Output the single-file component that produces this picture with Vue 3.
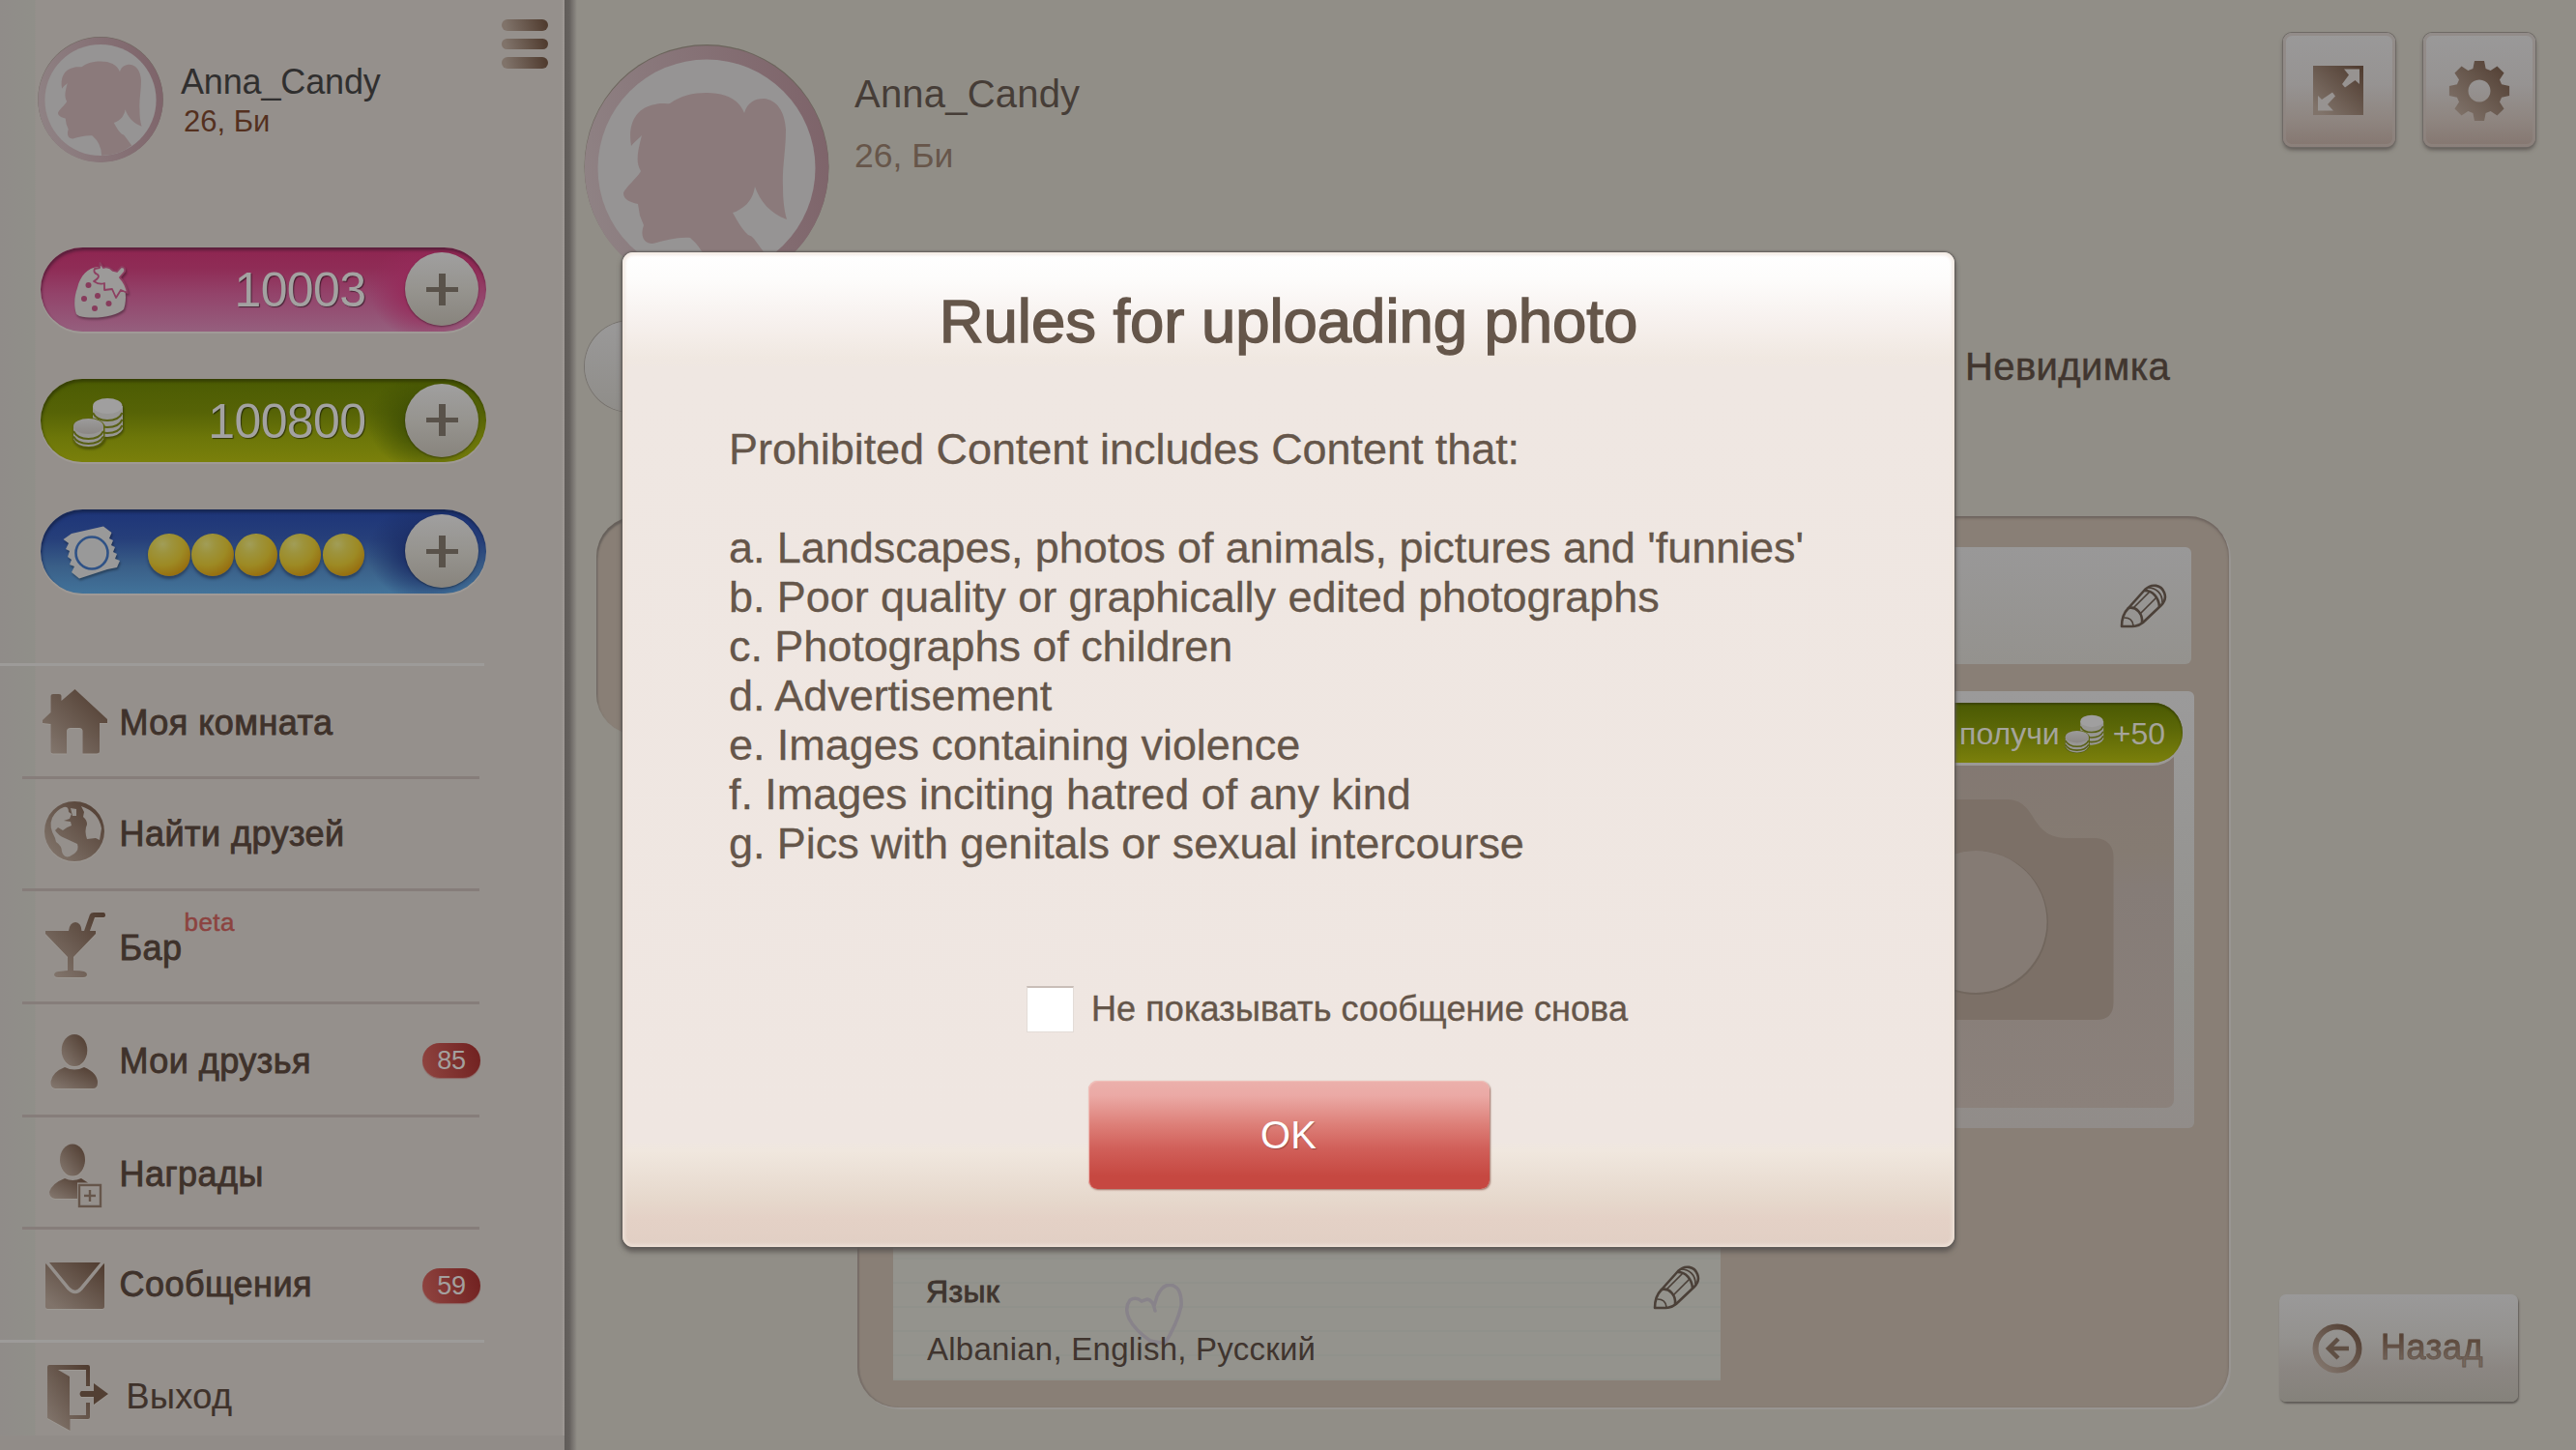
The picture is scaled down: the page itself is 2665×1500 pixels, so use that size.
<script setup>
const lives = [1, 2, 3, 4, 5]

const rules = [
  'Prohibited Content includes Content that:',
  '',
  "a. Landscapes, photos of animals, pictures and 'funnies'",
  'b. Poor quality or graphically edited photographs',
  'c. Photographs of children',
  'd. Advertisement',
  'e. Images containing violence',
  'f. Images inciting hatred of any kind',
  'g. Pics with genitals or sexual intercourse'
]

// Outline of an eight-toothed cog centred on 0,0
const gear = (() => {
  const pts = []
  for (let i = 0; i < 8; i++) {
    const a = (i * Math.PI) / 4
    for (const [r, d] of [[24, -0.28], [31.5, -0.16], [31.5, 0.16], [24, 0.28]]) {
      pts.push(`${(r * Math.sin(a + d)).toFixed(2)} ${(-r * Math.cos(a + d)).toFixed(2)}`)
    }
  }
  return `M${pts.join('L')}ZM0 -11.5A11.5 11.5 0 1 0 0.01 -11.5Z`
})()
</script>

<template>
  <div class="app">
    <svg class="defs" width="0" height="0" aria-hidden="true">
      <defs>
        <linearGradient id="brown" x1="0" y1="1" x2="1" y2="0">
          <stop offset="0.1" stop-color="#80736a" />
          <stop offset="1" stop-color="#4e3a2e" />
        </linearGradient>
        <linearGradient id="ring" x1="0" y1="0.6" x2="1" y2="0.4">
          <stop offset="0" stop-color="#8f8284" />
          <stop offset="1" stop-color="#7e646a" />
        </linearGradient>
        <linearGradient id="silver" x1="0" y1="0" x2="0" y2="1">
          <stop offset="0" stop-color="#9c9b9b" />
          <stop offset="1" stop-color="#8b8784" />
        </linearGradient>
        <symbol id="avatar" viewBox="0 0 254 254">
          <circle cx="127" cy="126.500" r="126.500" fill="#5d554c" opacity="0.75" />
          <circle cx="127" cy="127.500" r="126.300" fill="url(#ring)" />
          <circle cx="127" cy="128" r="112.500" fill="#969494" />
          <path fill="#8b7a7b" d="M49 105C45 82 54 65 74 62C80 60 85 62 89 61C100 53 113 50 127 50C146 50 160 56 166 71C169 60 177 56 186 56C200 57 208 70 209 88C209 110 205 128 206 147C206 160 207 170 210 181C193 175 182 162 177 147C175 160 168 169 154 174C159 183 164 192 170 197Q174 198 176 201L190 220Q164 241 129 240Q129 216 110 200C97 199 84 203 71 206C62 206 58 198 62 187L58 177L56 165C47 163 41 160 41 154C42 149 56 137 59 131C53 121 56 110 60 94C57 97 52 101 49 105Z" />
        </symbol>
        <symbol id="coins" viewBox="75 411 53 53">
          <path d="M96 420v24q3 8 15 8q13-1 16-8v-24z" fill="#979694" />
          <path d="M96 427q4 8 15 8q12 0 15.500-8M96 434q4 8 15 8q12 0 15.500-8M96 441q4 7 15 7q12 0 15.500-8" fill="none" stroke="#596015" stroke-width="2" />
          <ellipse cx="111.300" cy="420" rx="15.200" ry="8" fill="#a09f9f" />
          <path d="M74.500 440v14q4 9 17 9q13 0 17-9v-14q-5-8-17-8t-17 8z" fill="#5c640e" />
          <path d="M76 441v13q4 8 15.500 8T107 454v-13z" fill="#979694" />
          <path d="M76 446q4 8 15.500 8T107 446M76 451.500q4 7.500 15.500 7.500T107 451.500" fill="none" stroke="#596015" stroke-width="2" />
          <ellipse cx="91.500" cy="441" rx="15.500" ry="8" fill="url(#silver)" />
        </symbol>
        <symbol id="pencil" viewBox="-1 -1 49 47">
          <g fill="none" stroke="#4b4038" stroke-width="2.600" stroke-linejoin="round" stroke-linecap="round">
            <path d="M1 43C1 36 3 29 8 24L25 5C32-2 42 0 45 8C47 13 46 17 42 21L23 39C17 44 10 43 1 43Z" />
            <path d="M8 24C16 22 23 30 22 39M25 6C33 6 39 13 40 22" />
            <path d="M14 23L29 8M20 30L36 14M28 3C37 3 43 9 43 18M4 34Q12 34 13 42" stroke-width="1.700" />
          </g>
        </symbol>
      </defs>
    </svg>

    <aside class="sidebar">
      <div class="me">
        <svg class="me-avatar"><use href="#avatar" /></svg>
        <div class="me-text">
          <div class="me-name">Anna_Candy</div>
          <div class="me-info">26, Би</div>
        </div>
        <div class="burger"><i></i><i></i><i></i></div>
      </div>

      <div class="wallet">
        <div class="purse pink">
          <svg class="purse-icon" viewBox="63 255 76 87">
            <path fill="#999795" d="M79 324C76 315 77 305 80 297C83 284 91 276 101 275L126 290C132 302 130 313 128 319C121 326 98 330 82 326Z" />
            <path fill="#9c9a99" stroke="#8d3f61" stroke-width="1.800" stroke-linejoin="round" d="M103.500 271L107 276Q112 274 117 279L121 280L125.500 275Q130 275 129 280L124 286Q130 292 132 302L125 299L120 307L116 298L108 299L108 292Q103 294 97 290Q104 286 101 283Q96 281 98 277L103 276Z" />
            <g fill="#873c5c"><circle cx="91.500" cy="294" r="3" /><circle cx="87" cy="308" r="3" /><circle cx="101" cy="305" r="3" /><circle cx="98" cy="318" r="3" /><circle cx="112.500" cy="313" r="3" /></g>
          </svg>
          <span class="amount">10003</span>
          <span class="plus"></span>
        </div>
        <div class="purse green">
          <svg class="purse-icon" viewBox="63 391 76 87"><use href="#coins" x="75" y="411" width="53" height="53" /></svg>
          <span class="amount">100800</span>
          <span class="plus"></span>
        </div>
        <div class="purse blue">
          <svg class="purse-icon" viewBox="63 526 76 87">
            <path fill="#999999" d="M65.500 557L74 551L107 543.500L115.500 550L113 556L117 558L115 563L119 565L117 570L121 572L119 577L124 579L121 586L111 588L82 597.500L74 591L77 585L72 583L74 578L70 575L72 569L68 567L71 561Z" />
            <circle cx="95" cy="571" r="16.500" fill="none" stroke="#2f5286" stroke-width="2.600" />
          </svg>
          <span class="balls"><i v-for="n in lives" :key="n"></i></span>
          <span class="plus"></span>
        </div>
      </div>

      <nav class="menu">
        <hr class="bright" />
        <a class="item">
          <svg viewBox="40 689 83 114"><path fill="url(#brown)" d="M77.500 713L111 744V748H103V777Q103 779.500 100 779.500H85.500V756Q85 753 82 753H73Q69.500 753 69 756V779.500H55Q52.500 779.500 52.500 777V749L44 748V745L52.500 737V720Q52.500 718 55 718H61Q63.500 718 63.500 720V725Z" /></svg>
          <span class="low">Моя комната</span>
        </a>
        <hr />
        <a class="item short">
          <svg viewBox="40 806 83 113">
            <circle cx="77" cy="860" r="31" fill="url(#brown)" />
            <path fill="#95908c" d="M66 835Q71 834 71 840L74 842L72 847L66 849L73 850L74 854Q68 856 65 859L60 856L57 859Q60 864 67 867L80 873Q82 879 77 883L72 886Q66 888 64 881Q64 875 58 871L57 867Q50 855 54 846Q58 838 66 835ZM73 836L79 837L79 844L75 844ZM84 834Q102 840 105 857L103 869L99 867L90 868Q87 859 90 853Q90 848 86 845L87 840Z" />
          </svg>
          <span>Найти друзей</span>
        </a>
        <hr />
        <a class="item">
          <svg viewBox="40 922 83 114"><path fill="url(#brown)" d="M47 963H71Q72 954.500 78 954Q84 954.500 84.500 963H87L93 946Q94 944 97 944H107Q109 944 109 947Q109 949 106 949H98L93 963H99V966L76 990V1004Q83 1004 87 1005Q90 1006 90 1008Q90 1011 86 1011H60Q56 1011 56 1008Q57 1005 61 1005L70 1004V990L47 966Z" /></svg>
          <span class="low">Бар</span><sup class="beta">beta</sup>
        </a>
        <hr />
        <a class="item">
          <svg viewBox="40 1039 83 114">
            <ellipse cx="77" cy="1086.500" rx="13.300" ry="16.500" fill="url(#brown)" />
            <path fill="url(#brown)" d="M67 1104Q77 1109 87 1104Q101 1110 101 1120Q101 1126 96 1126H57Q52 1125 52.500 1119Q54 1109 67 1104Z" />
          </svg>
          <span class="low">Мои друзья</span><b class="badge">85</b>
        </a>
        <hr />
        <a class="item short">
          <svg viewBox="40 1156 83 113">
            <ellipse cx="75" cy="1200" rx="13" ry="16.500" fill="url(#brown)" />
            <path fill="url(#brown)" d="M67 1219Q75 1223 84 1219L91 1223.500H80V1240H57Q51 1239 51 1233Q54 1224 67 1219Z" />
            <path fill="none" stroke="#66564b" stroke-width="2.400" d="M82 1226H104V1248H82ZM93 1231V1243M87 1237H99" />
          </svg>
          <span class="low">Награды</span>
        </a>
        <hr />
        <a class="item">
          <svg viewBox="40 1272 83 114">
            <rect x="47" y="1306" width="61" height="48" rx="2.500" fill="url(#brown)" />
            <path d="M48 1305L71 1333Q78 1340 84 1333L107 1305" fill="none" stroke="#95908c" stroke-width="3.500" />
          </svg>
          <span>Сообщения</span><b class="badge">59</b>
        </a>
        <hr class="bright" />
        <a class="item exit">
          <svg viewBox="40 1389 90 111">
            <path fill="url(#brown)" d="M51 1412H91Q93 1412 93 1414V1434H89V1417H60L72 1424V1464H89V1451H93V1466Q93 1468 91 1468H72.500V1480L49 1467V1414Q49 1412 51 1412Z" />
            <path fill="#523f33" d="M84 1439H97V1431L112 1442L97 1453V1445H84Q81 1442 84 1439Z" />
          </svg>
          <span>Выход</span>
        </a>
      </nav>
    </aside>

    <main class="page">
      <header class="head">
        <svg class="big-avatar"><use href="#avatar" /></svg>
        <div class="who">
          <div class="who-name">Anna_Candy</div>
          <div class="who-info">26, Би</div>
        </div>
        <button class="square">
          <svg viewBox="2364 34 116 118">
            <rect x="2395" y="68" width="52" height="51" fill="url(#brown)" />
            <path fill="#979391" d="M2427 71.500H2443V87L2438.500 83L2428 90.500L2425 87L2432 77.500ZM2400 99L2404 103L2415 95.500L2418 99.500L2410 108L2416 114.500H2400Z" />
          </svg>
        </button>
        <button class="square">
          <svg viewBox="-58 -60 116 118"><path :d="gear" fill="url(#brown)" fill-rule="evenodd" /></svg>
        </button>
      </header>

      <div class="modes">
        <span class="mode"></span>
        <span class="mode-label">Невидимка</span>
      </div>

      <div class="content">
        <div class="tab"></div>
        <section class="panel">
          <div class="status"><svg class="pencil"><use href="#pencil" /></svg></div>
          <div class="photo-card">
            <div class="photo">
              <svg class="camera" viewBox="1848 737 400 409">
                <path fill="#7c7067" d="M1880 885Q1880 867 1898 867H1950Q1978 866 1990 841Q1996 827 2012 827H2076C2108 828 2098 865 2136 867H2168Q2186 869 2186 887V1037Q2186 1055 2168 1055H1898Q1880 1055 1880 1037Z" />
                <circle cx="2044" cy="954.500" r="74.500" fill="#71665d" />
                <circle cx="2043.500" cy="953.500" r="73.500" fill="#857b74" />
              </svg>
            </div>
            <div class="bonus">
              <span>получи</span>
              <svg class="bonus-coins"><use href="#coins" /></svg>
              <span>+50</span>
            </div>
          </div>
          <div class="lang">
            <svg class="heart" viewBox="1164 1327 60 63"><path d="M1195 1355Q1193 1344 1187 1343L1181 1345Q1175 1340 1169 1344Q1163 1352 1168 1363Q1174 1375 1190 1386L1205 1389Q1218 1368 1222 1350Q1223 1333 1214 1329Q1204 1325 1197 1340L1194 1350" fill="none" stroke="#88838a" stroke-width="3.500" stroke-linecap="round" /></svg>
            <div class="lang-head"><span class="lang-title">Язык</span><svg class="pencil"><use href="#pencil" /></svg></div>
            <div class="lang-value">Albanian, English, Русский</div>
          </div>
        </section>
        <button class="back">
          <svg viewBox="0 0 52 52">
            <circle cx="26" cy="26" r="22.500" fill="none" stroke="url(#brown)" stroke-width="6" />
            <path d="M38 26H19M27 16L17 26L27 36" fill="none" stroke="#5f4f44" stroke-width="4.500" />
          </svg>
          <span>Назад</span>
        </button>
      </div>
    </main>

    <div class="dialog">
      <h1>Rules for uploading photo</h1>
      <div class="rules"><div v-for="(line, i) in rules" :key="i" class="rule">{{ line }}</div></div>
      <label class="again"><span class="box"></span>Не показывать сообщение снова</label>
      <button class="ok">OK</button>
    </div>
  </div>
</template>

<style>
body { margin: 0; background: #918e87; overflow: hidden; }
</style>

<style scoped>
* { box-sizing: border-box; }
.app {
  position: relative;
  display: flex;
  width: 2665px;
  height: 1500px;
  overflow: hidden;
  background: #918e87;
  font-family: "Liberation Sans", Arial, sans-serif;
  white-space: nowrap;
}
.defs { position: absolute; }
button { border: 0; padding: 0; font-family: inherit; }
svg { display: block; flex: none; }

/* Sidebar */
.sidebar {
  flex: none;
  width: 600px;
  height: 1500px;
  background:
    linear-gradient(90deg, #5f5b58 0, #65615e 5px, #7b7773 9px, #918e87 13px) 584px 0 / 16px 100% no-repeat,
    linear-gradient(#918c88, #918c88) 0 1485px / 584px 15px no-repeat,
    linear-gradient(90deg, #908c89 0, #908f89 36px, #95908c 37px, #95908c 581px, #a09b97 584px) 0 0 / 584px 100% no-repeat;
}
.me { display: flex; height: 256px; padding-left: 39px; }
.me-avatar { width: 130px; height: 130px; margin-top: 38px; }
.me-text { width: 332px; margin: 64px 0 0 18px; }
.me-name { font-size: 36px; line-height: 41px; color: #302f2f; letter-spacing: -0.15px; }
.me-info { padding: 1px 0 0 3px; font-size: 31px; line-height: 40px; color: #54301f; }
.burger { display: flex; flex-direction: column; gap: 8px; padding-top: 20px; }
.burger i {
  width: 48px;
  height: 11.500px;
  border-radius: 6px;
  background: linear-gradient(75deg, #80736a 10%, #4d382b);
}

.wallet { display: flex; flex-direction: column; gap: 49px; padding-left: 42px; height: 430px; }
.purse {
  position: relative;
  display: flex;
  align-items: center;
  width: 461px;
  height: 86.500px;
  border-radius: 44px;
  padding: 0 8px 0 21px;
}
.pink { background: radial-gradient(ellipse 60px 52px at 400px 44px, #962a5aee 35%, #962a5a00), linear-gradient(#8e2550, #8f2c56 25%, #93436a 55%, #955f7e); box-shadow: inset 1px 3px 3px #5b1f3c, 0 2px 1px #a09b97; }
.green { background: radial-gradient(ellipse 62px 52px at 400px 44px, #405004ee 35%, #40500400), linear-gradient(#4b5b03, #566306 40%, #6c7609 70%, #7a800b); box-shadow: inset 1px 3px 3px #364004, 0 2px 1px #a09b97; }
.blue { background: radial-gradient(ellipse 62px 52px at 400px 44px, #1b2d66ee 35%, #1b2d6600), linear-gradient(#1d3478, #263f7a 35%, #3a5f88 68%, #42739a); box-shadow: inset 1px 3px 3px #172753, 0 2px 1px #a09b97; }
.purse-icon { width: 76px; height: 87px; filter: drop-shadow(1px 2px 1px #0005); }
.amount {
  width: 239.500px;
  padding-top: 2px;
  font-size: 50px;
  line-height: 84px;
  letter-spacing: -0.6px;
  text-align: right;
  color: #a3a2a1;
  text-shadow: 1px 1px 1px #0008;
}
.plus {
  width: 76px;
  height: 76px;
  margin-left: auto;
  border-radius: 50%;
  background:
    linear-gradient(#59524a, #59524a) center / 33px 5px no-repeat,
    linear-gradient(#59524a, #59524a) center / 7px 33px no-repeat,
    linear-gradient(#a09f9f, #96948f 50%, #88847d);
  box-shadow: 0 1px 2px #0006;
}
.balls { display: flex; gap: 1.700px; padding: 8px 0 0 14px; }
.balls i {
  width: 43.500px;
  height: 44px;
  border-radius: 50%;
  background: radial-gradient(circle at 35% 25%, #a19d58 0, #9d933c 22%, #9d8a24 50%, #976e0f 78%, #8f6409);
  box-shadow: 0 3px 3px #1a233c88;
}

.menu hr { width: 473px; height: 3px; margin: 0 0 0 23px; border: 0; background: #867d7a; }
.menu hr.bright { width: 501px; margin-left: 0; background: #9d9b99; }
.item {
  position: relative;
  display: flex;
  align-items: center;
  width: 473px;
  height: 114px;
  margin-left: 23px;
  padding-left: 17px;
  font-size: 36px;
  letter-spacing: 0.45px;
  color: #3f322b;
  -webkit-text-stroke: 0.900px #3f322b;
}
.item.short { height: 113px; }
.item svg { width: 83px; height: 100%; margin-right: 0.500px; filter: drop-shadow(0 1px 0 #a5a19c88); }
.low { padding-top: 4px; }
.beta {
  align-self: flex-start;
  margin: 17px 0 0 2px;
  font-size: 26px;
  line-height: 30px;
  color: #8c4340;
  -webkit-text-stroke: 0.500px #8c4340;
}
.badge {
  width: 60px;
  height: 36px;
  margin: 1px -1px 0 auto;
  border-radius: 18px;
  background: linear-gradient(75deg, #904541, #70201f);
  box-shadow: 0 1px 1px #8c6462;
  font-size: 27px;
  font-weight: 400;
  line-height: 36px;
  letter-spacing: -0.3px;
  text-align: center;
  color: #a3a09e;
  -webkit-text-stroke: 0;
}
.exit { height: 111px; -webkit-text-stroke: 0.200px #3f322b; }
.exit svg { width: 90px; }

/* Profile page */
.page { width: 2065px; height: 1500px; }
.head { display: flex; height: 332px; padding-left: 4px; }
.big-avatar { width: 254px; height: 254px; margin-top: 46px; }
.who { width: 1478px; margin: 73px 0 0 26px; }
.who-name { font-size: 40px; line-height: 48px; letter-spacing: 0.2px; color: #463d37; }
.who-info { font-size: 35.500px; line-height: 80px; color: #67564a; }
.square {
  width: 116px;
  height: 118px;
  margin: 34px 29px 0 0;
  border-radius: 9px;
  background: linear-gradient(#9a9999, #969392 45%, #8f8681 75%, #857770);
  box-shadow: inset 0 0 0 3px #8f8681aa, 0 0 0 1px #6f6a66, 0 3px 4px #5e5955;
}
.square svg { width: 116px; height: 118px; }

.modes { display: flex; align-items: center; height: 94px; padding-left: 5px; }
.mode {
  width: 500px;
  height: 94px;
  border-radius: 47px;
  background: linear-gradient(#9a9999, #8f8d89);
  box-shadow: 0 0 0 1px #76726e;
}
.mode-label { margin-left: 928px; font-size: 40px; letter-spacing: 0.4px; color: #41362f; -webkit-text-stroke: 0.500px #41362f; }

.content { display: flex; height: 923px; margin: 108px 0 0 17px; }
.tab {
  width: 270px;
  height: 226px;
  border-radius: 42px 0 0 42px;
  background: #897f76;
  box-shadow: inset 1px 3px 2px #66605b;
}
.panel {
  display: flex;
  flex-direction: column;
  width: 1419px;
  height: 922px;
  padding: 32px 36px 28px 37px;
  border-radius: 0 42px 42px 42px;
  background: #897f76;
  box-shadow: inset 0 2px 3px #6b615c, inset 2px 0 1px #7b726c, 2px 2px 0 #989592;
}
.pencil { width: 49px; height: 47px; }
.status {
  display: flex;
  justify-content: flex-end;
  align-items: center;
  height: 121px;
  margin-right: 3px;
  padding: 1px 25px 0 0;
  border-radius: 6px;
  background: linear-gradient(#999898, #94928e);
}
.photo-card {
  align-self: flex-end;
  width: 446px;
  height: 452px;
  margin-top: 28px;
  border-radius: 6px;
  background: linear-gradient(#9b9a9a, #92918d 65%, #918c89);
}
.bonus {
  display: flex;
  align-items: center;
  justify-content: flex-end;
  position: absolute;
  left: 1840px;
  top: 727px;
  width: 418px;
  height: 62px;
  padding: 2px 18px 0 0;
  border-radius: 31px;
  background: linear-gradient(#4a5903, #5a6607 40%, #7b800b);
  box-shadow: inset 0 2px 2px #3b4505, 0 3px 0 #9b9996;
  font-size: 32px;
  color: #a5a49b;
}
.bonus-coins { width: 41px; height: 41px; margin: 0 9px 0 5px; }
.photo {
  width: 400px;
  height: 409px;
  margin: 0 0 0 24px;
  padding-top: 22px;
  border-radius: 0 0 8px 8px;
}
.camera { width: 401px; height: 409px; border-radius: 0 0 8px 8px; background: linear-gradient(#827772, #857b72 35%, #857c77 45%, #8b817b); }
.lang {
  position: relative;
  width: 856px;
  height: 180px;
  margin-top: auto;
  padding: 49px 21px 0 34px;
  background:
    repeating-linear-gradient(transparent 0 23px, #90918b 23px 25px) 0 5px / 100% 100%,
    #94938d;
}
.heart { position: absolute; left: 240px; top: 80px; width: 60px; height: 63px; }
.lang-head { display: flex; justify-content: space-between; margin-top: 12px; height: 50px; }
.lang-title { padding-top: 9px; font-size: 32px; line-height: 36px; letter-spacing: 0.3px; color: #3f352f; -webkit-text-stroke: 0.900px #3f352f; }
.lang-value { position: relative; padding: 3px 0 0 1px; font-size: 33px; line-height: 68px; letter-spacing: 0.25px; color: #40352f; }
.back {
  display: flex;
  align-items: center;
  align-self: flex-end;
  width: 247px;
  height: 111px;
  margin: 0 0 7px 52px;
  padding-left: 34px;
  border-radius: 7px;
  background: linear-gradient(#9a9999, #94928f 40%, #8b8682 70%, #85827b);
  box-shadow: 1px 2px 2px #5f5b57;
  font-size: 36px;
  letter-spacing: 0.6px;
}
.back svg { width: 52px; height: 52px; }
.back span {
  margin: 0 0 1px 19px;
  background: linear-gradient(#553f31 15%, #75685f 85%);
  -webkit-background-clip: text;
  background-clip: text;
  color: transparent;
  -webkit-text-stroke: 0.900px #5f4f4499;
}

/* Dialog */
.dialog {
  position: absolute;
  left: 644px;
  top: 261px;
  display: flex;
  flex-direction: column;
  align-items: center;
  width: 1378px;
  height: 1029px;
  border-radius: 11px;
  background: linear-gradient(#fff 0, #fdfcfb 28px, #f7f1ee 70px, #f0e8e1 110px, #efe7e2 120px, #efe6e1 920px, #f0e7de 930px, #e6d8cc 980px, #e4d1c6 1000px, #e1cfc4 1029px);
  box-shadow: inset 0 0 3px 3px #efe3dab0, 0 0 2px 1px #5d5956, 0 4px 5px 1px #55504dcc;
  color: #65564a;
}
h1 {
  margin: 35px 0 0;
  font-size: 63.500px;
  font-weight: 400;
  line-height: 72px;
  letter-spacing: -0.05px;
  -webkit-text-stroke: 1.500px #65564a;
}
.rules { align-self: stretch; height: 459px; margin: 71px 0 0 108px; -webkit-text-stroke: 0.300px #65564a; }
.rule { height: 51px; padding-left: 2px; font-size: 45px; line-height: 51px; letter-spacing: -0.06px; }
.again {
  display: flex;
  align-items: center;
  height: 50px;
  margin: 121px 0 0 80px;
  font-size: 36px;
  letter-spacing: 0.1px;
  -webkit-text-stroke: 0.400px #65564a;
}
.box {
  width: 49px;
  height: 48px;
  margin-right: 18px;
  border: 1px solid #e3dcd7;
  border-top: 2px solid #c9beb8;
  background: #fff;
}
.ok {
  width: 415px;
  height: 112px;
  margin-top: 49px;
  border-radius: 9px;
  background: linear-gradient(#ebb0ab, #eba9a5 14%, #dd8079 40%, #d1605a 62%, #c64841 88%, #c64841);
  box-shadow: inset 1px 1px 1px #f1c1bb, 1px 1px 2px #a07064;
  font-size: 40px;
  line-height: 112px;
  color: #fff;
  text-shadow: 1px 1px 1px #0004;
}
</style>
